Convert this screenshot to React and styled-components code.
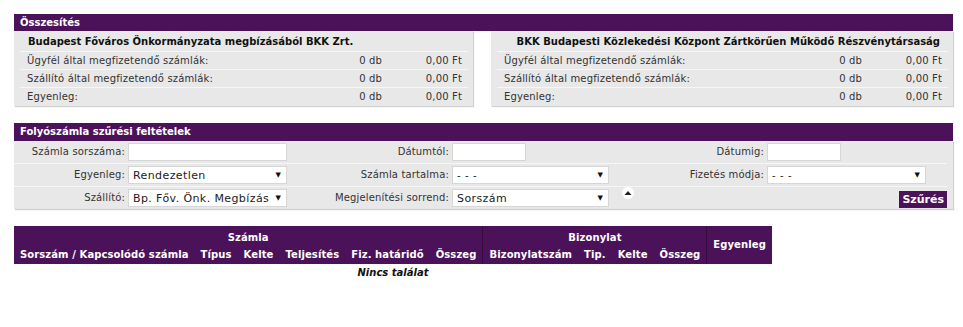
import styled, { createGlobalStyle } from "styled-components";

const PURPLE = "#4b1259";

const GlobalStyle = createGlobalStyle`
  body {
    margin: 0;
    background: #ffffff;
    font-family: "DejaVu Sans", Verdana, sans-serif;
    font-size: 10px;
    color: #222222;
  }
`;

const summary = [
  {
    title: "Budapest Főváros Önkormányzata megbízásából BKK Zrt.",
    align: "left",
  },
  {
    title: "BKK Budapesti Közlekedési Központ Zártkörűen Működő Részvénytársaság",
    align: "right",
  },
];

const summaryRows = [
  "Ügyfél által megfizetendő számlák:",
  "Szállító által megfizetendő számlák:",
  "Egyenleg:",
];

export default function App() {
  return (
    <Page>
      <GlobalStyle />
      <Panel>
        <PanelHeader>Összesítés</PanelHeader>
        <SummaryGrid>
          {summary.map((s) => (
            <SummaryBox key={s.title}>
              <SummaryTitle $align={s.align}>{s.title}</SummaryTitle>
              {summaryRows.map((label) => (
                <SummaryRow key={label}>
                  <span>{label}</span>
                  <Count>0 db</Count>
                  <Amount>0,00 Ft</Amount>
                </SummaryRow>
              ))}
            </SummaryBox>
          ))}
        </SummaryGrid>
      </Panel>

      <Panel>
        <PanelHeader $tall>Folyószámla szűrési feltételek</PanelHeader>
        <FilterBox>
          <FilterRow>
            <Label>Számla sorszáma:</Label>
            <Field>
              <TextInput $w={159} />
            </Field>
            <Label>Dátumtól:</Label>
            <Field>
              <TextInput $w={74} />
            </Field>
            <Label>Dátumig:</Label>
            <Field>
              <TextInput $w={74} />
            </Field>
          </FilterRow>
          <FilterRow>
            <Label>Egyenleg:</Label>
            <Field>
              <Select $w={159}>
                <SelectText>Rendezetlen</SelectText>
                <Caret>▼</Caret>
              </Select>
            </Field>
            <Label>Számla tartalma:</Label>
            <Field>
              <Select $w={157}>
                <SelectText $small>- - -</SelectText>
                <Caret>▼</Caret>
              </Select>
            </Field>
            <Label>Fizetés módja:</Label>
            <Field>
              <Select $w={159}>
                <SelectText $small>- - -</SelectText>
                <Caret>▼</Caret>
              </Select>
            </Field>
          </FilterRow>
          <FilterRow>
            <Label>Szállító:</Label>
            <Field>
              <Select $w={159}>
                <SelectText>Bp. Főv. Önk. Megbízás</SelectText>
                <Caret>▼</Caret>
              </Select>
            </Field>
            <Label>Megjelenítési sorrend:</Label>
            <Field>
              <Select $w={157}>
                <SelectText>Sorszám</SelectText>
                <Caret>▼</Caret>
              </Select>
              <SortToggle>
                <svg width="12" height="12" viewBox="0 0 12 12">
                  <circle cx="6" cy="6" r="6" fill="#ffffff" />
                  <path d="M2.5 8 L6 4 L9.5 8 Z" fill="#222222" />
                </svg>
              </SortToggle>
            </Field>
            <Label />
            <ButtonCell>
              <FilterButton>Szűrés</FilterButton>
            </ButtonCell>
          </FilterRow>
        </FilterBox>
      </Panel>

      <ResultTable>
        <thead>
          <tr>
            <Th colSpan={6} $group>Számla</Th>
            <Th colSpan={4} $group $sep>Bizonylat</Th>
            <Th rowSpan={2} $sep>Egyenleg</Th>
          </tr>
          <tr>
            <Th>Sorszám / Kapcsolódó számla</Th>
            <Th>Típus</Th>
            <Th>Kelte</Th>
            <Th>Teljesítés</Th>
            <Th>Fiz. határidő</Th>
            <Th>Összeg</Th>
            <Th $sep>Bizonylatszám</Th>
            <Th>Tip.</Th>
            <Th>Kelte</Th>
            <Th>Összeg</Th>
          </tr>
        </thead>
        <tbody>
          <tr>
            <Empty colSpan={11}>Nincs találat</Empty>
          </tr>
        </tbody>
      </ResultTable>
    </Page>
  );
}

const Page = styled.div`
  width: 939px;
  padding: 14px 0 0 14px;
`;

const Panel = styled.section`
  margin-bottom: 17px;
`;

const PanelHeader = styled.div`
  height: ${(p) => (p.$tall ? 18 : 17)}px;
  line-height: ${(p) => (p.$tall ? 18 : 17)}px;
  padding-left: 6px;
  background: ${PURPLE};
  color: #ffffff;
  font-weight: bold;
  font-size: 10px;
`;

const SummaryGrid = styled.div`
  display: grid;
  grid-template-columns: 459px 462px;
  justify-content: space-between;
`;

const SummaryBox = styled.div`
  background: #e8e8e8;
  padding: 0 5px 1px 6px;
  box-shadow: 1px 1px 1px #d0d0d0;
`;

const SummaryTitle = styled.div`
  height: 20px;
  line-height: 22px;
  padding: 0 8px;
  font-weight: bold;
  color: #111111;
  text-align: ${(p) => p.$align};
  border-bottom: 1px solid #f6f6f6;
`;

const SummaryRow = styled.div`
  display: grid;
  grid-template-columns: 1fr 60px 80px;
  height: 17px;
  line-height: 17px;
  padding: 0 6px 0 7px;
  color: #333333;
  letter-spacing: 0.15px;
  border-bottom: 1px solid #f6f6f6;

  &:last-child {
    border-bottom: 0;
  }
`;

const Count = styled.span`
  text-align: right;
`;

const Amount = styled.span`
  text-align: right;
`;

const FilterBox = styled.div`
  display: grid;
  grid-template-columns: 114px 164px 160px 160px 155px 1fr;
  background: #e8e8e8;
  padding: 0 6px 0 0;
  box-shadow: 1px 1px 1px #d0d0d0;
`;

const FilterRow = styled.div`
  display: contents;

  &:last-child > * {
    border-bottom: 0;
  }
`;

const Label = styled.div`
  height: 22px;
  line-height: 22px;
  text-align: right;
  color: #333333;
  letter-spacing: 0.15px;
  padding-right: 3px;
  border-bottom: 1px solid #f6f6f6;
`;

const Field = styled.div`
  height: 22px;
  display: flex;
  align-items: center;
  gap: 13px;
  border-bottom: 1px solid #f6f6f6;
`;

const ButtonCell = styled(Field)`
  justify-content: flex-end;
`;

const TextInput = styled.div`
  flex-shrink: 0;
  width: ${(p) => p.$w}px;
  height: 18px;
  box-sizing: border-box;
  background: #ffffff;
  border: 1px solid #d6d6d6;
`;

const Select = styled.div`
  flex-shrink: 0;
  width: ${(p) => p.$w}px;
  height: 18px;
  box-sizing: border-box;
  display: flex;
  align-items: center;
  background: #ffffff;
  border: 1px solid #d6d6d6;
  padding: 0 5px 0 4px;
`;

const SelectText = styled.span`
  flex: 1;
  overflow: hidden;
  white-space: nowrap;
  font-size: ${(p) => (p.$small ? 10 : 11)}px;
  color: #222222;
  letter-spacing: ${(p) => (p.$small ? 0.6 : 0.4)}px;
`;

const Caret = styled.span`
  font-size: 7px;
  color: #111111;
  margin-left: 3px;
`;

const SortToggle = styled.span`
  display: flex;
  flex-shrink: 0;
  margin-top: -11px;
`;

const FilterButton = styled.button`
  height: 17px;
  padding: 0 3px;
  border: 0;
  background: ${PURPLE};
  color: #ffffff;
  font-family: "DejaVu Sans", Verdana, sans-serif;
  font-size: 11px;
  font-weight: bold;
  margin-top: 3px;
`;

const ResultTable = styled.table`
  border-collapse: collapse;
`;

const Th = styled.th`
  background: ${PURPLE};
  color: #ffffff;
  font-size: 10px;
  font-weight: bold;
  letter-spacing: 0.1px;
  white-space: nowrap;
  height: ${(p) => (p.$group ? 18 : 16)}px;
  padding: ${(p) => (p.$group ? "2px 6px 0" : "0 6px 2px")};
  border-left: ${(p) => (p.$sep ? "1px solid #3a0c45" : "0")};
`;

const Empty = styled.td`
  text-align: center;
  font-weight: bold;
  font-style: italic;
  padding: 3px 0 0;
  color: #111111;
`;
